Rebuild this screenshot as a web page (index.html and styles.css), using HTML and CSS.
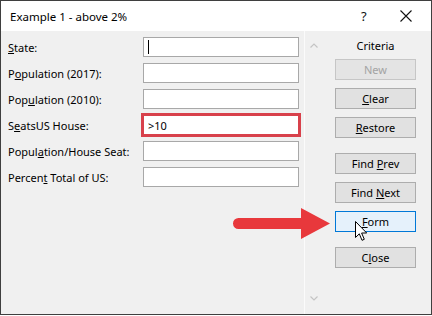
FILE: index.html
```html
<!DOCTYPE html>
<html lang="en">
<head>
    <meta charset="UTF-8">
    <title>Example 1 - above 2%</title>
    <link rel="stylesheet" href="styles.css">
</head>
<body>
    <div class="window">
        <div class="titlebar">
            <span class="title">Example 1 - above 2%</span>
            <span class="help">?</span>
            <svg class="close-x" width="12" height="12" viewBox="0 0 12 12">
                <path d="M0.5 0.5 L11.5 11.5 M11.5 0.5 L0.5 11.5" stroke="#111" stroke-width="1.1" fill="none"/>
            </svg>
        </div>

        <div class="body">
            <div class="form">
                <label><u>S</u>tate:</label>
                <div class="field"><span class="caret"></span></div>

                <label>P<u>o</u>pulation (2017):</label>
                <div class="field"></div>

                <label>Pop<u>u</u>lation (2010):</label>
                <div class="field"></div>

                <label>S<u>e</u>atsUS House:</label>
                <div class="field hl">&gt;10</div>

                <label>Popul<u>a</u>tion/House Seat:</label>
                <div class="field"></div>

                <label>Percen<u>t</u> Total of US:</label>
                <div class="field"></div>
            </div>

            <div class="scrollbar">
                <svg width="8" height="5" viewBox="0 0 8 5"><path d="M0.5 4.5 L4 1 L7.5 4.5" stroke="#c4c4c4" stroke-width="1.2" fill="none"/></svg>
                <svg width="8" height="5" viewBox="0 0 8 5"><path d="M0.5 0.5 L4 4 L7.5 0.5" stroke="#c4c4c4" stroke-width="1.2" fill="none"/></svg>
            </div>

            <div class="buttons">
                <div class="criteria">Criteria</div>
                <button class="btn" disabled>New</button>
                <button class="btn"><u>C</u>lear</button>
                <button class="btn"><u>R</u>estore</button>
                <button class="btn spaced">Find <u>P</u>rev</button>
                <button class="btn">Find <u>N</u>ext</button>
                <button class="btn hover"><u>F</u>orm</button>
                <button class="btn spaced">C<u>l</u>ose</button>
            </div>
        </div>

        <!-- red pointer drawn over the dialog -->
        <svg class="arrow" width="100" height="32" viewBox="0 0 100 32">
            <path d="M7.5 10 L70 10 L70 0 L99 15.5 L70 31 L70 21 L7.5 21 A5.5 5.5 0 0 1 7.5 10 Z" fill="#e8383c"/>
        </svg>

        <svg class="cursor" width="13" height="21" viewBox="0 0 13 21">
            <path d="M0.5 0.5 L0.5 16.5 L4.3 12.8 L7 19.3 L9.3 18.3 L6.6 12 L11.7 12 Z" fill="#fff" stroke="#000" stroke-width="1" stroke-linejoin="round"/>
        </svg>
    </div>
</body>
</html>
```

FILE: styles.css
```css
body {
    margin: 0;
    font-family: "Noto Sans", "Open Sans", sans-serif;
    font-size: 11px;
    color: #000;
    background: #fff;
}

.window {
    position: relative;
    width: 430px;
    height: 313px;
    border: 1px solid #3f3f3f;
    background: #f0f0f0;
    display: flex;
    flex-direction: column;
}

.titlebar {
    height: 30px;
    background: #fff;
    display: flex;
    align-items: center;
    padding-left: 9px;
}

.title {
    flex: 1;
    font-size: 11.5px;
}

.help {
    width: 39px;
    font-size: 13px;
    color: #111;
}

.close-x {
    margin-right: 19px;
}

.body {
    flex: 1;
    display: flex;
}

.form {
    width: 296px;
    padding: 6px 0 0 7px;
    display: grid;
    grid-template-columns: 135px 156px;
    grid-auto-rows: 20px;
    row-gap: 6px;
    align-items: center;
    align-content: start;
}

.form label {
    white-space: nowrap;
}

.field {
    height: 20px;
    box-sizing: border-box;
    background: #fff;
    border: 1px solid #a8a8a8;
    padding-left: 4px;
    display: flex;
    align-items: center;
    font-size: 11px;
}

.field.hl {
    border: 1px solid #d8414b;
    box-shadow: 0 0 0 2px #d8414b;
}

.caret {
    width: 1px;
    height: 14px;
    background: #000;
}

.scrollbar {
    width: 17px;
    border-left: 1px solid #fbfbfb;
    display: flex;
    flex-direction: column;
    justify-content: space-between;
    align-items: center;
    padding: 12px 0 13px;
}

.buttons {
    margin-left: 13px;
    width: 81px;
    padding-top: 5px;
    display: flex;
    flex-direction: column;
    gap: 8px;
}

.criteria {
    height: 20px;
    line-height: 20px;
    text-align: center;
    margin-bottom: -5px;
}

.btn {
    height: 21px;
    padding: 0;
    font-family: inherit;
    font-size: 11px;
    color: #000;
    background: #e1e1e1;
    border: 1px solid #adadad;
}

.btn.spaced {
    margin-top: 7px;
}

.btn:disabled {
    color: #a3a3a3;
    background: #e4e4e4;
    border-color: #c6c6c6;
}

.btn.hover {
    background: #e5f1fb;
    border-color: #0078d7;
}

.arrow {
    position: absolute;
    left: 230px;
    top: 207px;
}

.cursor {
    position: absolute;
    left: 354px;
    top: 220px;
}
```
